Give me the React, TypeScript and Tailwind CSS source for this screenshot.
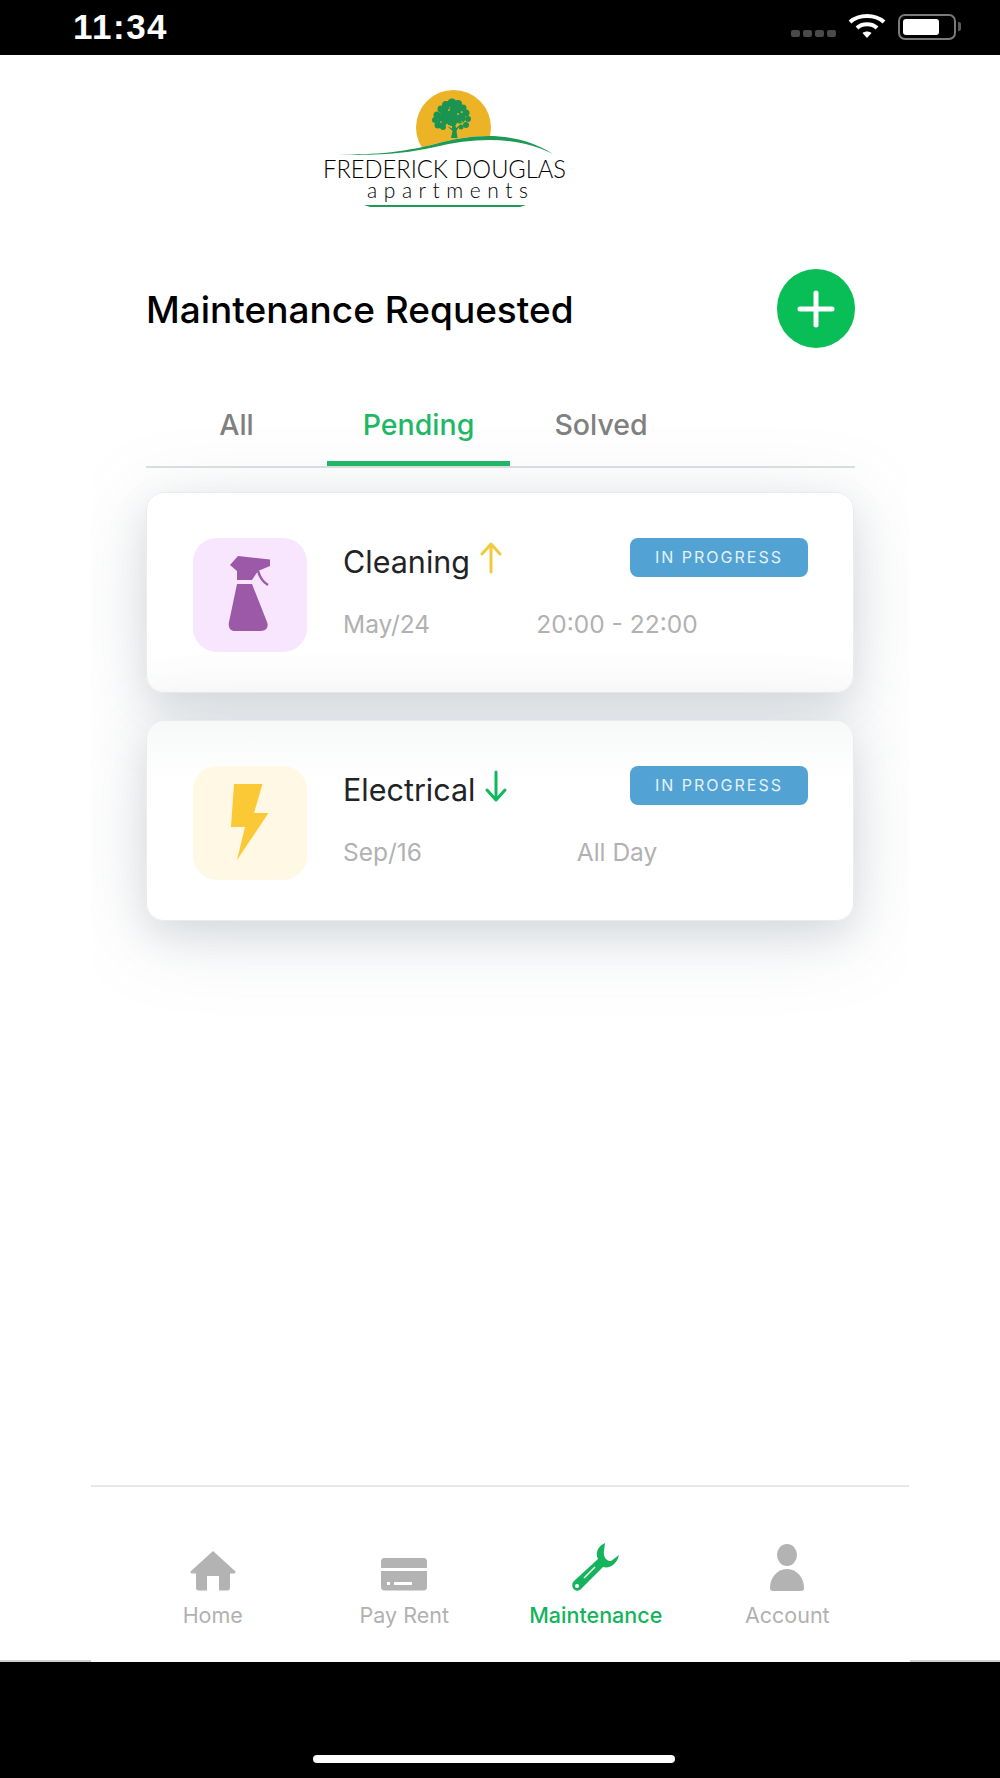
import React from 'react';

// canopy blobs of the tree in the logo: [cx, cy, r]
const canopy: [number, number, number][] = [
    [136, 20, 4], [142, 18, 4.5], [148, 19, 4], [153, 23, 3.5], [131, 24, 3.5],
    [127, 30, 3.5], [125, 35, 3], [128, 40, 3.5], [133, 42, 3], [156, 28, 3.5],
    [158, 34, 3], [156, 40, 3], [151, 42, 2.5], [136, 28, 6], [145, 26, 6],
    [150, 33, 5.5], [133, 35, 5.5], [142, 35, 6],
];

const Logo = () => (
    <svg width="270" height="125" viewBox="0 0 270 125" className="block">
        <circle cx="143.5" cy="42.5" r="37.5" fill="#edb327" />
        <path d="M27 70 C70 70 98 66 125 59 C165 48 208 46 243 69 L243 125 L27 125 Z" fill="#ffffff" />
        <g fill="#1b9452">
            {canopy.map(([cx, cy, r], i) => (
                <circle key={i} cx={cx} cy={cy} r={r} />
            ))}
            <path d="M142 38 L145 38 L146 43 L150 40 L146.5 46 L147.5 53 L141 53 L142.5 46 L137 41 L142 43.5 Z" />
        </g>
        <g fill="#edb327">
            <circle cx="139" cy="25" r="0.9" />
            <circle cx="148" cy="29" r="0.9" />
            <circle cx="152" cy="37" r="0.8" />
            <circle cx="131" cy="37" r="0.8" />
        </g>
        <path d="M27 69.5 C70 70 98 66 125 59 C165 48 208 46 243 69 C208 51 165 52.5 125 62 C98 68 70 71 27 69.5 Z" fill="#1e9a55" />
        <text x="13" y="93" textLength="243" lengthAdjust="spacingAndGlyphs" fontFamily="Lato, sans-serif" fontWeight="300" fontSize="25" fill="#000000">FREDERICK DOUGLAS</text>
        <text x="57" y="113" textLength="161" lengthAdjust="spacing" fontFamily="Lato, sans-serif" fontWeight="300" fontSize="21" fill="#000000">apartments</text>
        <path d="M54 120 L216 120 L210 122 L60 122 Z" fill="#1e9a55" />
    </svg>
);

const BottleIcon = () => (
    <svg width="114" height="114" viewBox="0 0 114 114">
        <path d="M37 27 L45 18 L77 21.5 L77 28 L65 33 L59 42 L44 42 L44 33 Z" fill="#9b59a8" />
        <path d="M65 33 C67 40 70 44 75 47" fill="none" stroke="#9b59a8" strokeWidth="2.5" />
        <path d="M44 46 L59 46 L74 84 C76 89 73 93 68 93 L42 93 C37 93 35 89 36 84 Z" fill="#9b59a8" />
    </svg>
);

const BoltIcon = () => (
    <svg width="114" height="114" viewBox="0 0 114 114">
        <path d="M41 18 L69.5 18 L61 47 L75.5 47 L44 94 L52 61 L38 61 Z" fill="#fbc935" />
    </svg>
);

const ArrowIcon: React.FC<{ dir: 'up' | 'down'; color: string }> = ({ dir, color }) => (
    <svg width="24" height="32" viewBox="0 0 24 32" fill="none" stroke={color} strokeWidth="3" strokeLinecap="round" strokeLinejoin="round">
        {dir === 'up' ? (
            <path d="M12 30 L12 2 M3 12 L12 2 L21 12" />
        ) : (
            <path d="M12 2 L12 30 M3 20 L12 30 L21 20" />
        )}
    </svg>
);

const HomeIcon = () => (
    <svg width="48" height="40" viewBox="0 0 48 40" fill="#b3b3b3">
        <path d="M24 0 L46 20 C47 21 46.5 22.5 45 22.5 L41 22.5 L41 37 C41 38.5 40 39.5 38.5 39.5 L30 39.5 L30 25 L18 25 L18 39.5 L9.5 39.5 C8 39.5 7 38.5 7 37 L7 22.5 L3 22.5 C1.5 22.5 1 21 2 20 Z" />
    </svg>
);

const CardIcon = () => (
    <svg width="46" height="33" viewBox="0 0 46 33" fill="#b3b3b3">
        <path d="M3 0 L43 0 C44.5 0 46 1.5 46 3 L46 10 L0 10 L0 3 C0 1.5 1.5 0 3 0 Z" />
        <path d="M0 13 L46 13 L46 29 C46 31 44.5 32.5 43 32.5 L3 32.5 C1.5 32.5 0 31 0 29 Z" />
        <rect x="6" y="24" width="3" height="3" fill="#ffffff" />
        <rect x="13" y="24" width="18" height="3" fill="#ffffff" />
    </svg>
);

const WrenchIcon = () => (
    <svg width="48" height="48" viewBox="0 0 48 48">
        <path d="M33 0 C26 3 23 10 26 16 L2 38 C-1 41 0 46 4 47.5 C6 48 8 47.5 10 45 L31 24 C38 26 45 21 47 12 L39 18 C34 18 31 13 32 8 Z" fill="#14b45c" />
        <circle cx="5" cy="43" r="2" fill="#ffffff" />
        <path d="M12 35 L23 24" stroke="#ffffff" strokeWidth="1.5" />
    </svg>
);

const PersonIcon = () => (
    <svg width="36" height="47" viewBox="0 0 36 47" fill="#b3b3b3">
        <ellipse cx="18" cy="11" rx="10" ry="11" />
        <path d="M18 25 C28 25 35 34 35 44 C35 46 34 47 32 47 L4 47 C2 47 1 46 1 44 C1 34 8 25 18 25 Z" />
    </svg>
);

interface RequestCardProps {
    title: string;
    date: string;
    time: string;
    tile: string;
    tint: string;
    icon: React.ReactNode;
    arrow: React.ReactNode;
}

const RequestCard: React.FC<RequestCardProps> = ({ title, date, time, tile, tint, icon, arrow }) => (
    <div className={`h-[201px] mr-px rounded-[18px] border border-[#e9ebed] pl-[46px] pr-[45px] pt-[45px] flex gap-[36px] shadow-[0_14px_34px_rgba(120,130,145,0.16),0_14px_80px_rgba(120,130,145,0.22)] ${tint}`}>
        <div className={`w-[114px] h-[114px] rounded-[24px] flex-shrink-0 ${tile}`}>{icon}</div>
        <div className="flex-1 min-w-0">
            <div className="flex justify-between items-start h-[48px]">
                <div className="flex items-start gap-[9px]">
                    <p className="text-[30.5px] leading-[48px] text-[#222326]">{title}</p>
                    <div className="pt-[4px]">{arrow}</div>
                </div>
                <div className="w-[178px] h-[39px] pb-[2px] rounded-[8px] bg-[#52a3d3] flex items-center justify-center text-[16px] tracking-[2px] text-[#e4f1f8]">IN PROGRESS</div>
            </div>
            <div className="flex mt-[22px] text-[24.5px] leading-[32px] text-[#b1b1b1]">
                <span className="w-[192px]">{date}</span>
                <span className="w-[164px] text-center whitespace-nowrap">{time}</span>
            </div>
        </div>
    </div>
);

const NavItem: React.FC<{ label: string; icon: React.ReactNode; active?: boolean }> = ({ label, icon, active }) => (
    <div className="flex-1 flex flex-col items-center">
        <div className="h-[48px] flex items-end">{icon}</div>
        <span className={`mt-[9px] text-[21.5px] leading-[30px] ${active ? 'text-[#14b45c] font-medium' : 'text-[#b1b1b1]'}`}>{label}</span>
    </div>
);

export default function App() {
    return (
        <div className="w-[1000px] h-[1778px] flex flex-col bg-white overflow-hidden font-[Inter,sans-serif]">
            <div className="h-[55px] flex-shrink-0 bg-black flex items-center pl-[73px] pr-[39px]">
                <span className="mb-[3px] font-['Liberation_Sans',sans-serif] font-bold text-[35px] tracking-[1.5px] leading-none text-white">11:34</span>
                <div className="ml-auto flex items-center">
                    <div className="flex gap-[3px] mr-[12px] mt-[12px]">
                        <div className="w-[9px] h-[7px] rounded-[2px] bg-[#4a4a4a]" />
                        <div className="w-[9px] h-[7px] rounded-[2px] bg-[#4a4a4a]" />
                        <div className="w-[9px] h-[7px] rounded-[2px] bg-[#4a4a4a]" />
                        <div className="w-[9px] h-[7px] rounded-[2px] bg-[#4a4a4a]" />
                    </div>
                    <svg width="38" height="25" viewBox="0 0 38 25" fill="none" stroke="#ffffff" strokeWidth="4" className="mr-[12px] mb-[2px]">
                        <path d="M2 8 C11 0 27 0 36 8" />
                        <path d="M9 14 C14 9 24 9 29 14" />
                        <path d="M14.5 19 L19 24 L23.5 19 C21 17 17 17 14.5 19 Z" fill="#ffffff" stroke="none" />
                    </svg>
                    <div className="w-[58px] h-[26px] mb-[2px] rounded-[7px] border-2 border-[#7a7a7a] p-[3px]">
                        <div className="w-[36px] h-full rounded-[3px] bg-white" />
                    </div>
                    <div className="w-[3px] h-[9px] ml-[2px] mb-[2px] rounded-r-[2px] bg-[#5a5a5a]" />
                </div>
            </div>

            <div className="flex-1 mx-[91px] flex flex-col overflow-hidden">
                <div className="flex-1 pl-[55px] pr-[54px] overflow-hidden">
                    <div className="mt-[30px] ml-[164px]">
                        <Logo />
                    </div>

                    <div className="mt-[59px] flex items-center justify-between">
                        <h1 className="mt-[2px] text-[37px] leading-[44px] font-[450] text-black">Maintenance Requested</h1>
                        <div className="w-[78px] h-[79px] rounded-full bg-[#09bd57] flex items-center justify-center">
                            <svg width="38" height="38" viewBox="0 0 38 38" stroke="#ffffff" strokeWidth="5" strokeLinecap="round">
                                <path d="M19 3 L19 35 M3 19 L35 19" />
                            </svg>
                        </div>
                    </div>

                    <div className="mt-[41px] flex border-b-2 border-[#dde0e1]">
                        <div className="w-[181px] h-[77px] border-b-[5px] border-transparent flex items-center justify-center text-[28.5px] font-[450] text-[#808080]">All</div>
                        <div className="w-[183px] h-[77px] border-b-[5px] border-[#1fb866] flex items-center justify-center text-[28.5px] font-[450] text-[#1fb866]">Pending</div>
                        <div className="w-[182px] h-[77px] border-b-[5px] border-transparent flex items-center justify-center text-[28.5px] font-[450] text-[#808080]">Solved</div>
                    </div>

                    <div className="mt-[24px] flex flex-col gap-[27px]">
                        <RequestCard
                            title="Cleaning"
                            date="May/24"
                            time="20:00 - 22:00"
                            tile="bg-[#f8e6ff]"
                            tint="bg-linear-to-b from-white from-[80%] to-[#fbfbfb]"
                            icon={<BottleIcon />}
                            arrow={<ArrowIcon dir="up" color="#f1c93c" />}
                        />
                        <RequestCard
                            title="Electrical"
                            date="Sep/16"
                            time="All Day"
                            tile="bg-[#fef8e5]"
                            tint="bg-linear-to-b from-[#f7f8f8] to-white to-[30%]"
                            icon={<BoltIcon />}
                            arrow={<ArrowIcon dir="down" color="#0fb85a" />}
                        />
                    </div>
                </div>

                <nav className="h-[175px] flex-shrink-0 border-t-2 border-[#e8e8e8] px-[26px] pt-[56px] flex">
                    <NavItem label="Home" icon={<HomeIcon />} />
                    <NavItem label="Pay Rent" icon={<CardIcon />} />
                    <NavItem label="Maintenance" icon={<WrenchIcon />} active />
                    <NavItem label="Account" icon={<PersonIcon />} />
                </nav>
            </div>

            <div className="h-[2px] flex-shrink-0 flex justify-between">
                <div className="w-[91px] bg-[#cfcfcf]" />
                <div className="w-[90px] bg-[#cfcfcf]" />
            </div>
            <div className="h-[116px] flex-shrink-0 bg-black flex flex-col items-center justify-end pb-[15px] pr-[12px]">
                <div className="w-[362px] h-[8px] rounded-full bg-white" />
            </div>
        </div>
    );
}
